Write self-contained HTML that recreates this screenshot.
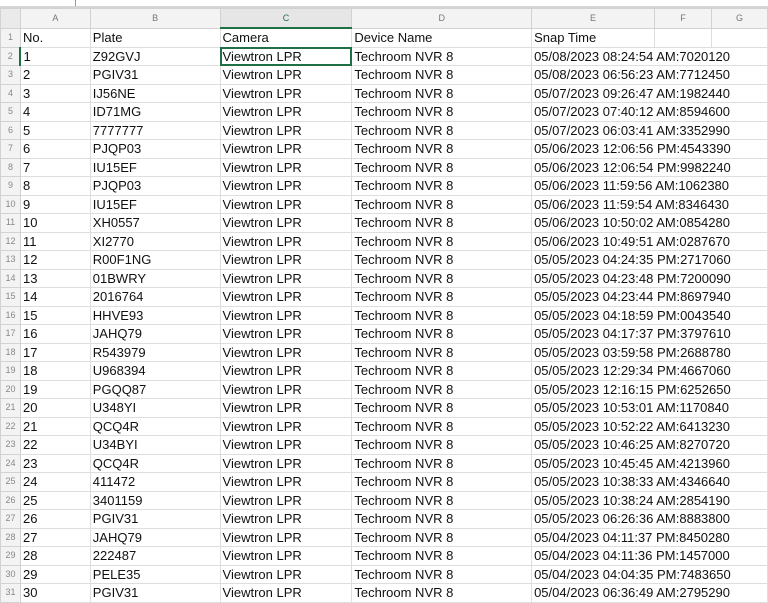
<!DOCTYPE html>
<html><head><style>
html,body{margin:0;padding:0;width:768px;height:594px;overflow:hidden;background:#fff;font-family:"Liberation Sans",sans-serif;}
.top{position:absolute;left:0;top:0;width:768px;height:6px;background:#fff;border-bottom:2px solid #d6d6d6;}
.top i{position:absolute;left:75px;top:0;width:1px;height:6px;background:#999}
table{position:absolute;left:0;top:8px;border-collapse:collapse;table-layout:fixed;}
td{border:1px solid #dedede;height:17.5px;padding:0 0 0 2px;font-size:13px;color:#111;white-space:nowrap;overflow:hidden;line-height:17px;}
tr.h td{background:#f3f3f3;color:#777;font-size:9px;text-align:center;height:18px;padding:0;border-color:#d2d2d2;}
td.n{background:#f3f3f3;color:#888;font-size:9px;text-align:center;padding:0;border-color:#d2d2d2;}
td.sel{outline:2px solid #1f7145;outline-offset:-2px;}
tr.h td.c{color:#1f7145;border-bottom:2px solid #1f7145;background:#e6e6e6}
</style></head><body>
<div class="top"><i></i></div>
<table>
<colgroup><col style="width:20px"><col style="width:70px"><col style="width:130px"><col style="width:132px"><col style="width:180px"><col style="width:123px"><col style="width:57px"><col style="width:56px"></colgroup>
<tr class="h"><td style="background:#eaeaea"></td><td>A</td><td>B</td><td class="c">C</td><td>D</td><td>E</td><td>F</td><td>G</td></tr>
<tr><td class="n">1</td><td>No.</td><td>Plate</td><td>Camera</td><td>Device Name</td><td>Snap Time</td><td></td><td></td></tr>
<tr><td class="n">2</td><td style="border-left:2px solid #1f7145">1</td><td>Z92GVJ</td><td class="sel">Viewtron LPR</td><td style="overflow:visible">Techroom NVR 8</td><td colspan="3">05/08/2023 08:24:54 AM:7020120</td></tr>
<tr><td class="n">3</td><td>2</td><td>PGIV31</td><td>Viewtron LPR</td><td>Techroom NVR 8</td><td colspan="3">05/08/2023 06:56:23 AM:7712450</td></tr>
<tr><td class="n">4</td><td>3</td><td>IJ56NE</td><td>Viewtron LPR</td><td>Techroom NVR 8</td><td colspan="3">05/07/2023 09:26:47 AM:1982440</td></tr>
<tr><td class="n">5</td><td>4</td><td>ID71MG</td><td>Viewtron LPR</td><td>Techroom NVR 8</td><td colspan="3">05/07/2023 07:40:12 AM:8594600</td></tr>
<tr><td class="n">6</td><td>5</td><td>7777777</td><td>Viewtron LPR</td><td>Techroom NVR 8</td><td colspan="3">05/07/2023 06:03:41 AM:3352990</td></tr>
<tr><td class="n">7</td><td>6</td><td>PJQP03</td><td>Viewtron LPR</td><td>Techroom NVR 8</td><td colspan="3">05/06/2023 12:06:56 PM:4543390</td></tr>
<tr><td class="n">8</td><td>7</td><td>IU15EF</td><td>Viewtron LPR</td><td>Techroom NVR 8</td><td colspan="3">05/06/2023 12:06:54 PM:9982240</td></tr>
<tr><td class="n">9</td><td>8</td><td>PJQP03</td><td>Viewtron LPR</td><td>Techroom NVR 8</td><td colspan="3">05/06/2023 11:59:56 AM:1062380</td></tr>
<tr><td class="n">10</td><td>9</td><td>IU15EF</td><td>Viewtron LPR</td><td>Techroom NVR 8</td><td colspan="3">05/06/2023 11:59:54 AM:8346430</td></tr>
<tr><td class="n">11</td><td>10</td><td>XH0557</td><td>Viewtron LPR</td><td>Techroom NVR 8</td><td colspan="3">05/06/2023 10:50:02 AM:0854280</td></tr>
<tr><td class="n">12</td><td>11</td><td>XI2770</td><td>Viewtron LPR</td><td>Techroom NVR 8</td><td colspan="3">05/06/2023 10:49:51 AM:0287670</td></tr>
<tr><td class="n">13</td><td>12</td><td>R00F1NG</td><td>Viewtron LPR</td><td>Techroom NVR 8</td><td colspan="3">05/05/2023 04:24:35 PM:2717060</td></tr>
<tr><td class="n">14</td><td>13</td><td>01BWRY</td><td>Viewtron LPR</td><td>Techroom NVR 8</td><td colspan="3">05/05/2023 04:23:48 PM:7200090</td></tr>
<tr><td class="n">15</td><td>14</td><td>2016764</td><td>Viewtron LPR</td><td>Techroom NVR 8</td><td colspan="3">05/05/2023 04:23:44 PM:8697940</td></tr>
<tr><td class="n">16</td><td>15</td><td>HHVE93</td><td>Viewtron LPR</td><td>Techroom NVR 8</td><td colspan="3">05/05/2023 04:18:59 PM:0043540</td></tr>
<tr><td class="n">17</td><td>16</td><td>JAHQ79</td><td>Viewtron LPR</td><td>Techroom NVR 8</td><td colspan="3">05/05/2023 04:17:37 PM:3797610</td></tr>
<tr><td class="n">18</td><td>17</td><td>R543979</td><td>Viewtron LPR</td><td>Techroom NVR 8</td><td colspan="3">05/05/2023 03:59:58 PM:2688780</td></tr>
<tr><td class="n">19</td><td>18</td><td>U968394</td><td>Viewtron LPR</td><td>Techroom NVR 8</td><td colspan="3">05/05/2023 12:29:34 PM:4667060</td></tr>
<tr><td class="n">20</td><td>19</td><td>PGQQ87</td><td>Viewtron LPR</td><td>Techroom NVR 8</td><td colspan="3">05/05/2023 12:16:15 PM:6252650</td></tr>
<tr><td class="n">21</td><td>20</td><td>U348YI</td><td>Viewtron LPR</td><td>Techroom NVR 8</td><td colspan="3">05/05/2023 10:53:01 AM:1170840</td></tr>
<tr><td class="n">22</td><td>21</td><td>QCQ4R</td><td>Viewtron LPR</td><td>Techroom NVR 8</td><td colspan="3">05/05/2023 10:52:22 AM:6413230</td></tr>
<tr><td class="n">23</td><td>22</td><td>U34BYI</td><td>Viewtron LPR</td><td>Techroom NVR 8</td><td colspan="3">05/05/2023 10:46:25 AM:8270720</td></tr>
<tr><td class="n">24</td><td>23</td><td>QCQ4R</td><td>Viewtron LPR</td><td>Techroom NVR 8</td><td colspan="3">05/05/2023 10:45:45 AM:4213960</td></tr>
<tr><td class="n">25</td><td>24</td><td>411472</td><td>Viewtron LPR</td><td>Techroom NVR 8</td><td colspan="3">05/05/2023 10:38:33 AM:4346640</td></tr>
<tr><td class="n">26</td><td>25</td><td>3401159</td><td>Viewtron LPR</td><td>Techroom NVR 8</td><td colspan="3">05/05/2023 10:38:24 AM:2854190</td></tr>
<tr><td class="n">27</td><td>26</td><td>PGIV31</td><td>Viewtron LPR</td><td>Techroom NVR 8</td><td colspan="3">05/05/2023 06:26:36 AM:8883800</td></tr>
<tr><td class="n">28</td><td>27</td><td>JAHQ79</td><td>Viewtron LPR</td><td>Techroom NVR 8</td><td colspan="3">05/04/2023 04:11:37 PM:8450280</td></tr>
<tr><td class="n">29</td><td>28</td><td>222487</td><td>Viewtron LPR</td><td>Techroom NVR 8</td><td colspan="3">05/04/2023 04:11:36 PM:1457000</td></tr>
<tr><td class="n">30</td><td>29</td><td>PELE35</td><td>Viewtron LPR</td><td>Techroom NVR 8</td><td colspan="3">05/04/2023 04:04:35 PM:7483650</td></tr>
<tr><td class="n">31</td><td>30</td><td>PGIV31</td><td>Viewtron LPR</td><td>Techroom NVR 8</td><td colspan="3">05/04/2023 06:36:49 AM:2795290</td></tr>
</table>
</body></html>
